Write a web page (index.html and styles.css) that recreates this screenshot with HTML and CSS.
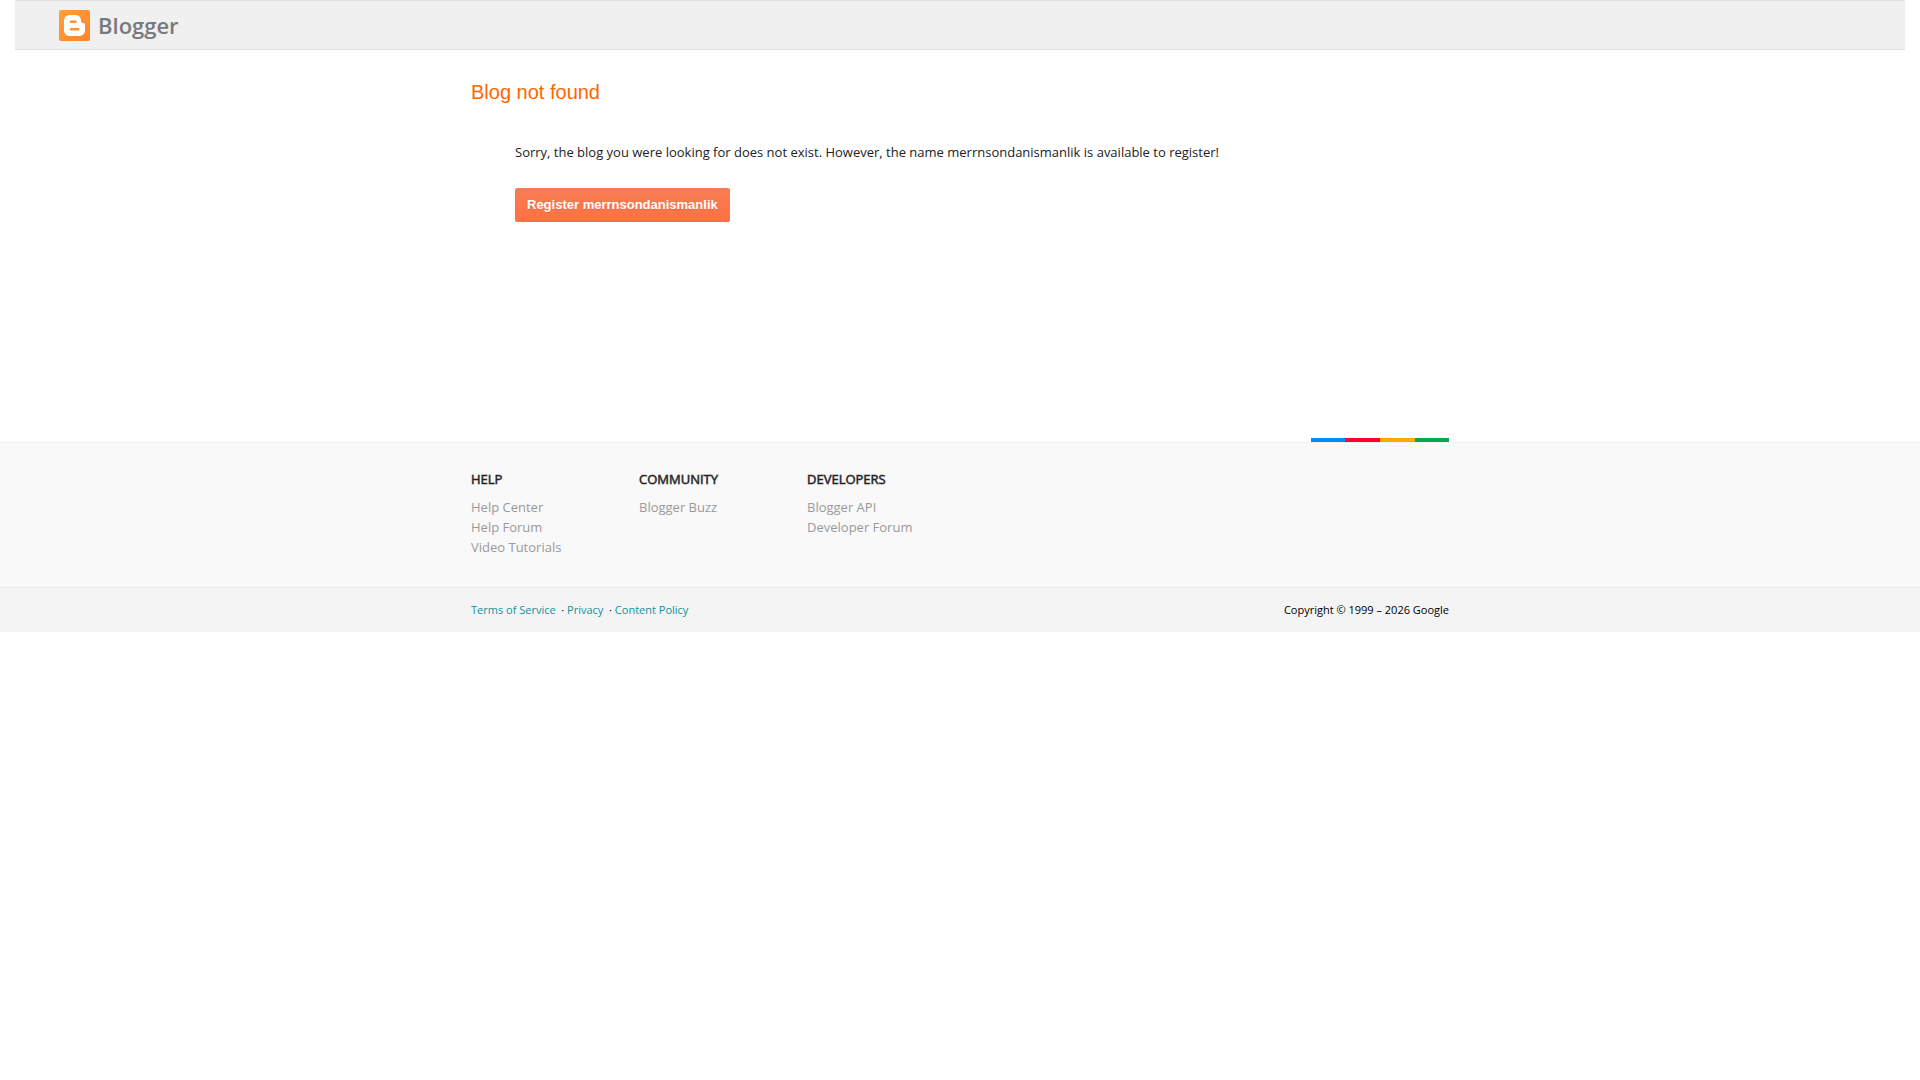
FILE: index.html
```html
<!DOCTYPE html>
<html lang="en">
<head>
<meta charset="utf-8">
<meta name="viewport" content="width=device-width, initial-scale=1">
<title>Blog not found</title>
<link rel="stylesheet" href="styles.css">
</head>
<body>
<header class="header">
  <a class="logo" href="#" aria-label="Blogger">
    <svg class="logo-icon" viewBox="0 0 31 31" aria-hidden="true">
      <defs>
        <linearGradient id="tile" x1="0" y1="0" x2="1" y2="1">
          <stop offset="0" stop-color="#ffa03d"/>
          <stop offset="1" stop-color="#ff8427"/>
        </linearGradient>
      </defs>
      <rect width="31" height="31" rx="2" fill="url(#tile)"/>
      <path fill="#fff" d="M11 5h5.500C20 5 22 7.500 22 10.500c0 1.700.6 2.500 2 2.500 1.300 0 2 .6 2 1.700V20c0 3.700-2.400 6-6 6h-9c-3.700 0-6-2.400-6-6v-9c0-3.700 2.400-6 6-6z"/>
      <path fill="none" stroke="#ff912f" stroke-width="2.400" stroke-linecap="round" d="M12 11.700h4.600M12 19.300h7.200"/>
    </svg>
    <span class="logo-name">Blogger</span>
  </a>
</header>
<main class="main">
  <h1 class="title">Blog not found</h1>
  <div class="message">
    <p class="message-text">Sorry, the blog you were looking for does not exist. However, the name merrnsondanismanlik is available to register!</p>
    <button class="register" type="button">Register merrnsondanismanlik</button>
  </div>
</main>
<footer class="footer">
  <div class="footer-links">
    <div class="wrap">
      <div class="stripe"><span class="blue"></span><span class="red"></span><span class="yellow"></span><span class="green"></span></div>
      <nav class="columns" aria-label="Resources">
        <section>
          <h2 class="column-title">HELP</h2>
          <ul class="column-list">
            <li><a href="#">Help Center</a></li>
            <li><a href="#">Help Forum</a></li>
            <li><a href="#">Video Tutorials</a></li>
          </ul>
        </section>
        <section>
          <h2 class="column-title">COMMUNITY</h2>
          <ul class="column-list">
            <li><a href="#">Blogger Buzz</a></li>
          </ul>
        </section>
        <section>
          <h2 class="column-title">DEVELOPERS</h2>
          <ul class="column-list">
            <li><a href="#">Blogger API</a></li>
            <li><a href="#">Developer Forum</a></li>
          </ul>
        </section>
      </nav>
    </div>
  </div>
  <div class="footer-legal">
    <div class="wrap legal">
      <div><a href="#">Terms of Service</a> &nbsp;·&nbsp;<a href="#">Privacy</a> &nbsp;·&nbsp;<a href="#">Content Policy</a></div>
      <div>Copyright © 1999 – 2026 Google</div>
    </div>
  </div>
</footer>
</body>
</html>
```
FILE: styles.css
```css
* { box-sizing: border-box; }
body {
  margin: 0;
  background: #fff;
  color: #222;
  font: 13px/20px "Open Sans", sans-serif;
}
h1, h2, p, ul { margin: 0; padding: 0; }
a { text-decoration: none; }

.header {
  margin: 0 15px;
  padding: 9px 44px 8px;
  background: #f0f0f0;
  border-top: 1px solid #e0e0e0;
  border-bottom: 1px solid #e0e0e0;
}
.logo {
  display: inline-flex;
  align-items: center;
  gap: 8px;
  vertical-align: top;
  color: #777a7c;
}
.logo-icon { width: 31px; height: 31px; }
.logo-name { font-size: 22px; line-height: 31px; font-weight: 600; }

.main, .wrap {
  max-width: 978px;
  margin: 0 auto;
}
.main { padding: 30px 0 220px; }
.title {
  color: #f60;
  font: 20px/24px "Liberation Sans", Arial, sans-serif;
}
.message { padding: 38px 44px 0; }
.message-text { margin-bottom: 26px; }
.register {
  display: block;
  padding: 0 12px;
  border: 0;
  border-radius: 2px;
  background: linear-gradient(#f77d55, #ff7043);
  color: #fff;
  font: bold 13px/34px "Liberation Sans", Arial, sans-serif;
  text-shadow: 0 1px rgba(0, 0, 0, .1);
}

.footer-links {
  background: #f9f9f9;
  border-top: 1px solid #f2f2f2;
}
.stripe {
  display: grid;
  grid-template-columns: 34px 35px 35px 34px;
  width: 138px;
  height: 4px;
  margin: -5px 0 0 auto;
}
.blue { background: #008cff; }
.red { background: #ff0032; }
.yellow { background: #ffaa00; }
.green { background: #00a850; }
.columns {
  display: grid;
  grid-template-columns: repeat(auto-fill, 144px);
  gap: 24px;
  padding: 27px 0 30px;
}
.column-title {
  margin-bottom: 8px;
  font-size: 13px;
  line-height: 20px;
  font-weight: 400;
  -webkit-text-stroke: 1px rgba(34, 34, 34, .5);
}
.column-list { list-style: none; }
.column-list a { color: #999; }
.footer-legal {
  padding: 12px 0;
  background: #f4f4f4;
  border-top: 1px solid #e8e8e8;
  color: #000;
  font-size: 11px;
}
.legal { display: flex; justify-content: space-between; }
.legal a { color: #12929b; }
```
